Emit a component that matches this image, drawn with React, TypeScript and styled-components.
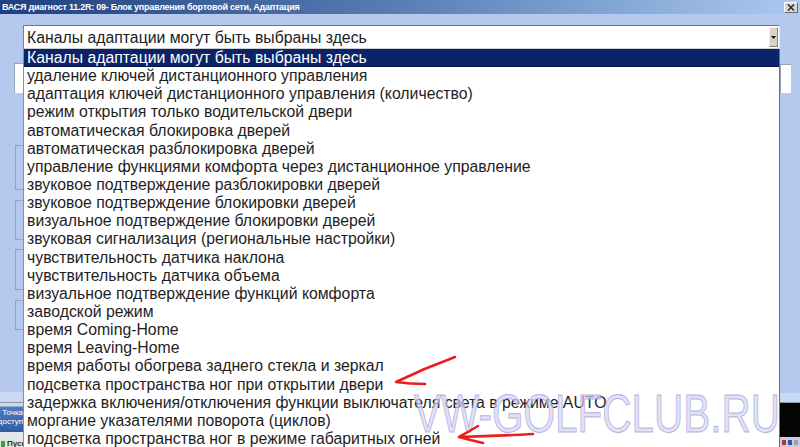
import React from "react";
import styled, { createGlobalStyle } from "styled-components";

const Global = createGlobalStyle`
  html, body { margin: 0; padding: 0; overflow: hidden; background: #b5c9ee; }
  * { box-sizing: border-box; }
`;

const ITEMS = [
  "Каналы адаптации могут быть выбраны здесь",
  "удаление ключей дистанционного управления",
  "адаптация ключей дистанционного управления (количество)",
  "режим открытия только водительской двери",
  "автоматическая блокировка дверей",
  "автоматическая разблокировка дверей",
  "управление функциями комфорта через дистанционное управление",
  "звуковое подтверждение разблокировки дверей",
  "звуковое подтверждение блокировки дверей",
  "визуальное подтверждение блокировки дверей",
  "звуковая сигнализация (региональные настройки)",
  "чувствительность датчика наклона",
  "чувствительность датчика объема",
  "визуальное подтверждение функций комфорта",
  "заводской режим",
  "время Coming-Home",
  "время Leaving-Home",
  "время работы обогрева заднего стекла и зеркал",
  "подсветка пространства ног при открытии двери",
  "задержка включения/отключения функции выключателя света в режиме AUTO",
  "моргание указателями поворота (циклов)",
  "подсветка пространства ног в режиме габаритных огней",
];

const Screen = styled.div`
  position: relative;
  width: 800px;
  height: 447px;
  overflow: hidden;
  display: flex;
  flex-direction: column;
  background: #b5c9ee;
  font-family: "Liberation Sans", Arial, sans-serif;
`;

const TitleBar = styled.div`
  height: 14px;
  flex: none;
  display: flex;
  align-items: center;
  justify-content: space-between;
  padding: 0 2px 0 2px;
  background: linear-gradient(to right, #1f3f7e 0%, #5a7db5 50%, #a9caf1 100%);
`;

const TitleText = styled.span`
  color: #fff;
  font-weight: bold;
  font-size: 9px;
  letter-spacing: -0.25px;
  white-space: nowrap;
`;

const CloseBtn = styled.div`
  width: 14px;
  height: 11px;
  background: #d8d6d0;
  border: 1px solid;
  border-color: #fff #6a6a6a #6a6a6a #fff;
  display: flex;
  align-items: center;
  justify-content: center;
`;

const Body = styled.div`
  flex: 1;
  display: flex;
  min-height: 0;
`;

const Gutter = styled.div<{ $w: number }>`
  width: ${(p) => p.$w}px;
  flex: none;
  display: flex;
  flex-direction: column;
`;

const Gap = styled.div<{ $h: number }>`
  height: ${(p) => p.$h}px;
  flex: none;
`;

const Fill = styled.div`
  flex: 1;
`;

const WhiteBox = styled.div<{ $ml: number; $w: number; $h: number }>`
  margin-left: ${(p) => p.$ml}px;
  width: ${(p) => p.$w}px;
  height: ${(p) => p.$h}px;
  background: #fff;
  border-left: 1px solid #9aa4b8;
  border-top: 1px solid #9aa4b8;
  flex: none;
`;

const Bracket = styled.div<{ $h: number }>`
  margin-left: 15px;
  width: 8px;
  height: ${(p) => p.$h}px;
  border: 1px solid #97a3bb;
  border-right: none;
  flex: none;
`;

const LightStrip = styled.div<{ $h: number }>`
  height: ${(p) => p.$h}px;
  background: #c9d8f3;
  border-bottom: 1px solid #8d99ad;
  flex: none;
`;

const Balloon = styled.div`
  height: 29px;
  flex: none;
  background: linear-gradient(#d0d8e4 0px, #d0d8e4 3px, #4f7dc0 4px, #2f5da3 100%);
  color: #fff;
  font-size: 8px;
  line-height: 9px;
  padding: 5px 0 0 3px;
  display: flex;
  flex-direction: column;
  align-items: flex-end;
  font-family: "Liberation Sans", Arial, sans-serif;
  white-space: nowrap;
  overflow: hidden;
`;

const BalloonLine = styled.span`
  display: block;
`;

const DeskGap = styled.div`
  height: 8px;
  flex: none;
  background: #e3e8ef;
`;

const StartBar = styled.div`
  height: 7px;
  flex: none;
  background: #dfe6d8;
  display: flex;
  align-items: flex-start;
  gap: 2px;
  padding-left: 1px;
  font-size: 8px;
  line-height: 8px;
  font-weight: bold;
  color: #333;
  overflow: hidden;
  white-space: nowrap;
`;

const StartIcon = styled.span`
  width: 4px;
  height: 6px;
  margin-top: 1px;
  background: #3aa035;
  flex: none;
`;

const BlackArea = styled.div`
  height: 34px;
  flex: none;
  background: #050505;
`;

const TrayBar = styled.div`
  height: 10px;
  flex: none;
  background: #c8d0dc;
  display: flex;
  align-items: center;
  gap: 2px;
  padding-left: 2px;
`;

const TrayDot = styled.span<{ $c: string }>`
  width: 4px;
  height: 5px;
  background: ${(p) => p.$c};
`;

const Center = styled.div`
  width: 757px;
  flex: none;
  display: flex;
  flex-direction: column;
  padding-top: 11px;
`;

const Combo = styled.div`
  height: 24px;
  flex: none;
  display: flex;
  align-items: stretch;
  background: #fff;
  border: 1px solid;
  border-color: #6f7480 #e8e8e8 #d0d0d0 #7d828c;
  padding: 1px 1px 1px 3px;
`;

const ComboText = styled.div`
  flex: 1;
  font-size: 15.8px;
  line-height: 21px;
  color: #1c1c1c;
  white-space: nowrap;
`;

const ComboButton = styled.div`
  width: 9px;
  background: #d6d3cc;
  border: 1px solid;
  border-color: #f4f4f4 #808080 #808080 #f4f4f4;
  display: flex;
  align-items: center;
  justify-content: center;
`;

const List = styled.div`
  flex: 1;
  background: #fff;
  border-left: 1px solid #8a8f99;
  border-right: 1px solid #6a6f78;
  overflow: hidden;
  display: flex;
  flex-direction: column;
`;

const Row = styled.div<{ $sel?: boolean }>`
  height: 18.15px;
  flex: none;
  padding-left: 3px;
  font-size: 15.8px;
  line-height: 18px;
  white-space: nowrap;
  color: ${(p) => (p.$sel ? "#fff" : "#1e1e1e")};
  background: ${(p) => (p.$sel ? "#0b2467" : "transparent")};
  border-bottom: ${(p) => (p.$sel ? "1px solid #05144a" : "none")};
`;

const Watermark = styled.div`
  position: absolute;
  left: 414px;
  top: 386px;
  font-family: "Liberation Sans", Arial, sans-serif;
  font-size: 54px;
  line-height: 54px;
  color: rgba(212, 212, 244, 0.7);
  -webkit-text-stroke: 1px rgba(160, 160, 212, 0.75);
  transform: scaleX(0.75);
  transform-origin: left top;
  white-space: nowrap;
  pointer-events: none;
`;

const Arrows = styled.svg`
  position: absolute;
  left: 0;
  top: 0;
  pointer-events: none;
`;

export default function App() {
  return (
    <>
      <Global />
      <Screen>
        <TitleBar>
          <TitleText>ВАСЯ диагност 11.2R: 09- Блок управления бортовой сети, Адаптация</TitleText>
          <CloseBtn>
            <svg width="8" height="7" viewBox="0 0 8 7">
              <path d="M1 0.5 L7 6.5 M7 0.5 L1 6.5" stroke="#222" strokeWidth="1.4" />
            </svg>
          </CloseBtn>
        </TitleBar>
        <Body>
          <Gutter $w={23}>
            <Gap $h={49} />
            <WhiteBox $ml={14} $w={9} $h={30} />
            <Gap $h={52} />
            <Bracket $h={45} />
            <Gap $h={10} />
            <Bracket $h={40} />
            <Gap $h={9} />
            <Bracket $h={41} />
            <Gap $h={10} />
            <Bracket $h={30} />
            <Fill />
            <LightStrip $h={11} />
            <Balloon>
              <BalloonLine>Точка</BalloonLine>
              <BalloonLine>доступ</BalloonLine>
            </Balloon>
            <DeskGap />
            <StartBar>
              <StartIcon />
              Пуск
            </StartBar>
          </Gutter>
          <Center>
            <Combo>
              <ComboText>Каналы адаптации могут быть выбраны здесь</ComboText>
              <ComboButton>
                <svg width="5" height="3" viewBox="0 0 5 3">
                  <path d="M0 0 H5 L2.5 3 Z" fill="#111" />
                </svg>
              </ComboButton>
            </Combo>
            <List>
              {ITEMS.map((t, i) => (
                <Row key={i} $sel={i === 0}>
                  {t}
                </Row>
              ))}
            </List>
          </Center>
          <Gutter $w={20}>
            <Gap $h={50} />
            <WhiteBox $ml={0} $w={11} $h={29} />
            <Fill />
            <LightStrip $h={10} />
            <BlackArea />
            <TrayBar>
              <TrayDot $c="#c03030" />
              <TrayDot $c="#3050c0" />
              <TrayDot $c="#a0a0a0" />
            </TrayBar>
          </Gutter>
        </Body>
        <Watermark>VW-GOLFCLUB.RU</Watermark>
        <Arrows width="800" height="447" viewBox="0 0 800 447">
          <g fill="none" stroke="#ee1c1c" strokeWidth="2.6" strokeLinecap="round" strokeLinejoin="round">
            <path d="M455 357 Q425 368 396 382 Q410 384 425 384" />
            <path d="M533 434 Q495 436 459 437 M478 426 Q468 432 459 437 Q470 440 483 443" />
          </g>
        </Arrows>
      </Screen>
    </>
  );
}
